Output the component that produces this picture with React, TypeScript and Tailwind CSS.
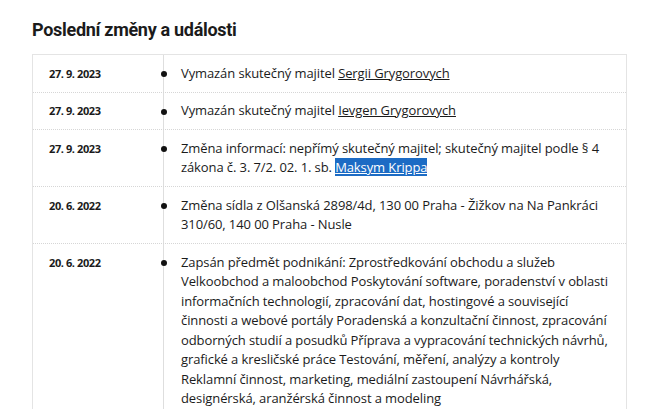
type Event = {
  id: number;
  date: string;
  content: React.ReactNode;
};

const events: Event[] = [
  {
    id: 1,
    date: "27. 9. 2023",
    content: (
      <>
        Vymazán skutečný majitel <a className="underline">Sergii Grygorovych</a>
      </>
    ),
  },
  {
    id: 2,
    date: "27. 9. 2023",
    content: (
      <>
        Vymazán skutečný majitel <a className="underline">Ievgen Grygorovych</a>
      </>
    ),
  },
  {
    id: 3,
    date: "27. 9. 2023",
    content: (
      <>
        Změna informací: nepřímý skutečný majitel; skutečný majitel podle § 4 zákona č. 3. 7/2. 02. 1. sb.{" "}
        <a className="underline bg-[#1c6bc4] text-white">Maksym Krippa</a>
      </>
    ),
  },
  {
    id: 4,
    date: "20. 6. 2022",
    content: "Změna sídla z Olšanská 2898/4d, 130 00 Praha - Žižkov na Na Pankráci 310/60, 140 00 Praha - Nusle",
  },
  {
    id: 5,
    date: "20. 6. 2022",
    content:
      "Zapsán předmět podnikání: Zprostředkování obchodu a služeb Velkoobchod a maloobchod Poskytování software, poradenství v oblasti informačních technologií, zpracování dat, hostingové a související činnosti a webové portály Poradenská a konzultační činnost, zpracování odborných studií a posudků Příprava a vypracování technických návrhů, grafické a kresličské práce Testování, měření, analýzy a kontroly Reklamní činnost, marketing, mediální zastoupení Návrhářská, designérská, aranžérská činnost a modeling",
  },
];

export default function App() {
  return (
    <div className="w-[650px] h-[409px] overflow-hidden bg-white text-[#1b1b1b] font-['Open_Sans',sans-serif]">
      <h2 className="ml-8 pt-[16px] pb-[10px] text-[18px] leading-7 font-bold tracking-[-0.3px] font-['Roboto',sans-serif]">
        Poslední změny a události
      </h2>

      <div className="ml-8 w-[595px] border border-b-0 border-[#e4e4e4]">
        {events.map((ev) => (
          <div key={ev.id} className="flex border-b border-dotted border-[#d6d6d6] last:border-b-0">
            {/* Date */}
            <div className="w-[130px] shrink-0 pl-4 py-[8.5px] text-[11px] leading-[19.5px] font-bold tracking-[-0.4px]">
              {ev.date}
            </div>

            {/* Timeline + text */}
            <div className="relative flex-1 border-l border-[#dedede] pl-[17px] pr-[13px] py-[8.5px] text-[13px] leading-[19.5px] tracking-[-0.1px]">
              <span className="absolute left-[-3.5px] top-[16px] w-[6px] h-[6px] rounded-full bg-[#111]" />
              {ev.content}
            </div>
          </div>
        ))}
      </div>
    </div>
  );
}
